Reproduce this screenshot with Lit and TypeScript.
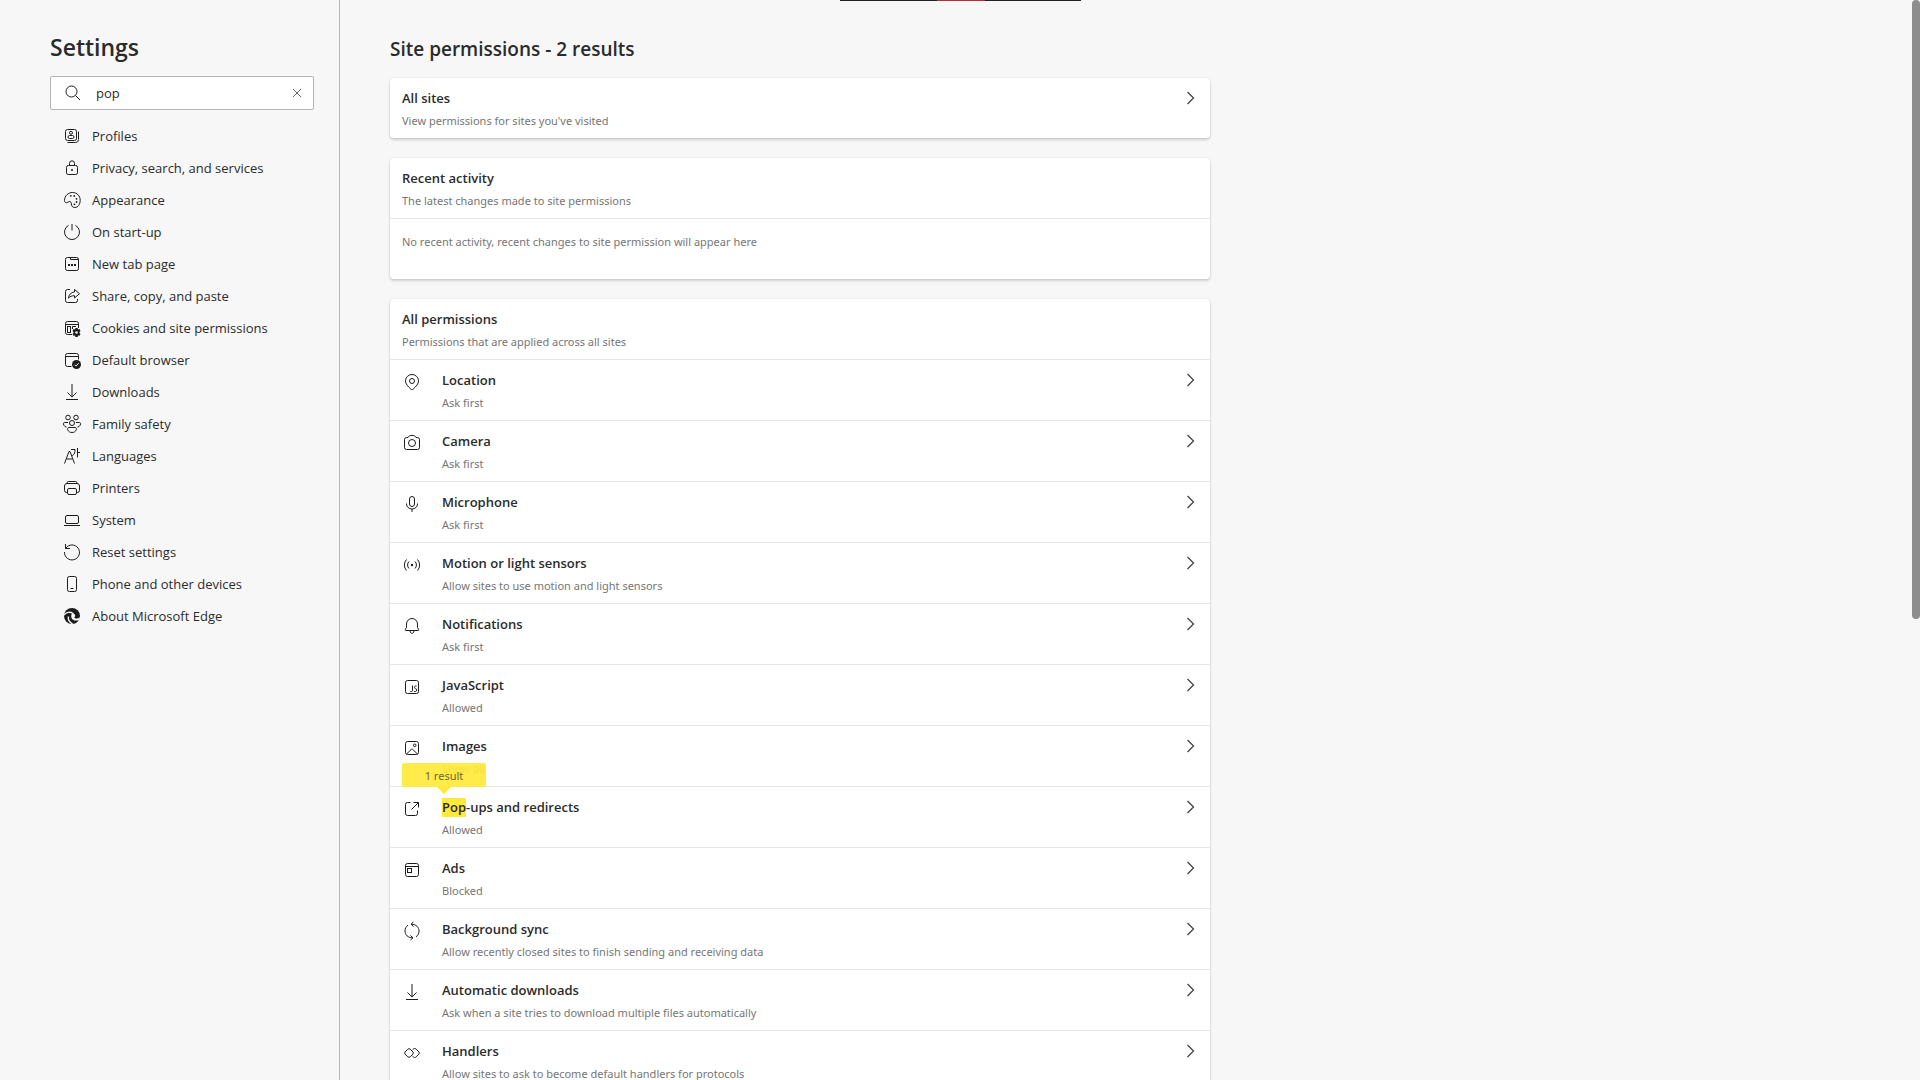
import { LitElement, html, css, svg, nothing } from "lit";
import type { SVGTemplateResult } from "lit";
import { customElement, property, state } from "lit/decorators.js";
import { classMap } from "lit/directives/class-map.js";

/* All icons are drawn on a 20 x 20 grid with one-pixel strokes. */
const icons: Record<string, SVGTemplateResult> = {
  search: svg`<circle cx="9.5" cy="8.5" r="5.5"/><path d="M13.5 12.5L18 17"/>`,
  clear: svg`<path d="M6 6l8 8M14 6l-8 8"/>`,
  chevron: svg`<path d="M6.5 4l6 6-6 6" stroke-width="1.3"/>`,
  profiles: svg`<rect x="3.5" y="3.5" width="11" height="11" rx="2"/><path d="M16.5 5.5v8a3 3 0 0 1-3 3h-8"/><circle cx="9" cy="6.8" r="1.5"/><rect x="6" y="9.5" width="6" height="3" rx="1.5"/>`,
  lock: svg`<rect x="4.5" y="7.5" width="11" height="9" rx="1.8"/><path d="M7.5 7.5V5.3a2.5 2.5 0 0 1 5 0v2.2"/><circle class="fill" cx="10" cy="12" r="1"/>`,
  palette: svg`<path d="M2.5 10.3C2.6 5.8 6.2 2.5 10.5 2.5c4.6 0 7.7 3.4 7.7 7.7 0 4.2-2.2 7.3-5.4 7.3-2.6 0-3.3-1.7-3.5-3.6-.2-1.7-.6-2.5-1.6-2.5-1.3 0-2 1.4-3.4 1.4-1.2 0-1.8-1.1-1.8-2.5z"/><g class="fill"><circle cx="8.8" cy="5.8" r=".9"/><circle cx="12.2" cy="6" r=".9"/><circle cx="14.5" cy="8.8" r=".9"/><circle cx="14.6" cy="12" r=".9"/><circle cx="12.5" cy="14.3" r=".9"/></g>`,
  power: svg`<path d="M10 2v6.5M6.5 3.4a7.5 7.5 0 1 0 7 0"/>`,
  newtab: svg`<rect x="3.5" y="3.5" width="13" height="13" rx="2"/><path d="M8.5 3.5v2h8"/><path class="fill" d="M6 10h2v2H6zM9 10h2v2H9zM12 10h2v2h-2z"/>`,
  share: svg`<path d="M8 3.5H5.5a2 2 0 0 0-2 2v9a2 2 0 0 0 2 2h8a2 2 0 0 0 2-2V13"/><path d="M12.5 3.5l5 4.2-5 4.3V9.7c-2.8 0-4.6.8-6 2.5.4-3.5 2.4-5.9 6-6.3z" stroke-linejoin="round"/>`,
  cookies: svg`<path d="M10 16.5H5.5a2 2 0 0 1-2-2v-9a2 2 0 0 1 2-2h9a2 2 0 0 1 2 2V10M3.5 6.5h13M10.5 11V8.5H14"/><rect x="5.5" y="8.5" width="3" height="6"/><path class="fill" fill-rule="evenodd" d="M13.4 10h2.2l.4 1.4 1.5-.3 1 1.8-1 1.1 0 .9 1 1.1-1 1.8-1.5-.3-.4 1.4h-2.2l-.4-1.4-1.5.3-1-1.8 1-1.1 0-.9-1-1.1 1-1.8 1.5.3zM14.5 13.2a1.3 1.3 0 1 0 0 2.6 1.3 1.3 0 0 0 0-2.6z"/>`,
  browser: svg`<path d="M9.5 16.5h-4a2 2 0 0 1-2-2v-9a2 2 0 0 1 2-2h9a2 2 0 0 1 2 2v4M3.5 6.5h13"/><circle class="fill" cx="14.5" cy="14.5" r="4.5"/><path class="cut" d="M12.5 14.7l1.4 1.4 2.7-2.9"/>`,
  download: svg`<path d="M10 2v13M5.5 10.5L10 15l4.5-4.5M4 17.5h12"/>`,
  family: svg`<circle cx="6" cy="3.5" r="2.3"/><circle cx="14" cy="3.5" r="2.3"/><circle cx="10" cy="9" r="2.5"/><path d="M6 8.5H2.5C.5 8.5 1.5 13 4.5 13M14 8.5h3.5c2 0 1 4.5-2 4.5M6.5 13.5h7c1.6 0 1.300 5-3.500 5s-5.100-5-3.500-5z"/>`,
  languages: svg`<path d="M2.5 17.5L7 5.5h1l4.500 12M4.500 13h6M9 3.500h4c.3 2.500-.5 5-2.800 6.300M15.500 2v9.500M15.500 6.500H18"/>`,
  printer: svg`<path d="M5.500 14.500H4.500a2 2 0 0 1-2-2V8a2.500 2.500 0 0 1 2.500-2.500h10A2.500 2.500 0 0 1 17.500 8v4.500a2 2 0 0 1-2 2h-1M5 5.500v-.5A1.500 1.500 0 0 1 6.500 3.500h7A1.500 1.500 0 0 1 15 5v.5"/><rect x="5.500" y="10.500" width="9" height="6" rx="1.500"/>`,
  laptop: svg`<rect x="3.500" y="5.500" width="13" height="8" rx="1.500"/><path d="M2 15.500h16"/>`,
  reset: svg`<path d="M3.500 2v4.500H8M3.800 6.200A7.500 7.500 0 1 1 2.500 10"/>`,
  phone: svg`<rect x="5.500" y="2.500" width="9" height="15" rx="1.800"/><path d="M8.500 14.500h3"/>`,
  edge: svg`<circle class="fill" cx="10" cy="10" r="8"/><path class="cut" d="M2 9C4 6 8.300 5.400 11 7.500" stroke-width="1.400"/><path class="cut" d="M6.400 10.500c-.5 3 1 5.800 4.200 7.400" stroke-width="1.400"/><path class="cutfill" d="M10.800 7c2.600.8 2.900 3.400 1.500 4.400.5 1.500 3.300 1.500 5.900-.2l-1 2.800c-3.400 1.500-7.900.2-8-3.800 0-1.300.6-2.500 1.600-3.200z"/>`,
  pin: svg`<circle cx="10" cy="9" r="2.500"/><path d="M10 17.600c-.5 0-.9-.2-1.200-.5C6 14.400 3.500 12 3.500 8.900a6.500 6.400 0 0 1 13 0c0 3.100-2.500 5.500-5.300 8.200-.3.300-.7.500-1.200.5z"/>`,
  camera: svg`<path d="M4.500 4.500H6l1.200-1.500c.3-.3.600-.5 1-.5h3.600c.4 0 .7.200 1 .5L14 4.500h1.500a2 2 0 0 1 2 2v8a2 2 0 0 1-2 2h-11a2 2 0 0 1-2-2v-8a2 2 0 0 1 2-2z"/><circle cx="10" cy="10" r="3.500"/>`,
  mic: svg`<rect x="7.500" y="2.500" width="5" height="10" rx="2.500"/><path d="M4.500 9.500v.5a5.500 5 0 0 0 11 0v-.5M10 15v3"/>`,
  sensors: svg`<circle class="fill" cx="10" cy="10" r="1.200"/><path d="M4.500 4.500a8.200 8.200 0 0 0 0 11M15.500 4.500a8.200 8.200 0 0 1 0 11M7 6.500a5 5 0 0 0 0 7M13 6.500a5 5 0 0 1 0 7"/>`,
  bell: svg`<path d="M10 2.500a5.500 5.500 0 0 0-5.500 5.500v3.300L3.300 13.700c-.2.400 0 .8.500.8h12.400c.500 0 .7-.4.5-.8L15.500 11.300V8A5.500 5.500 0 0 0 10 2.500zM8 15c.2 1.600 1 2.300 2 2.300s1.800-.7 2-2.300"/>`,
  script: svg`<rect x="3.500" y="3.500" width="13" height="13" rx="2"/><path d="M10.500 8.500v5c0 .7-.3 1-.9 1H8.300M14.700 9h-1.200c-1.300 0-1.300 2.600 0 2.600 1.700 0 1.700 2.900 0 2.900h-1.500"/>`,
  image: svg`<rect x="3.500" y="3.500" width="13" height="13" rx="2.200"/><path d="M4.500 16l4.800-4.600a1 1 0 0 1 1.400 0L15.500 16"/><circle cx="12.700" cy="7.300" r="1.300"/>`,
  popup: svg`<path d="M8.500 3.500H5.500a2 2 0 0 0-2 2v9a2 2 0 0 0 2 2h8a2 2 0 0 0 2-2v-3M11.500 3.500h5v5M16.500 3.500l-7 7"/>`,
  ads: svg`<rect x="3.500" y="3.500" width="13" height="13" rx="2"/><path d="M3.500 6.500h13"/><rect x="5.500" y="8.500" width="4" height="4"/>`,
  sync: svg`<path d="M11.500 1L9 3.200l2.500 2.300M8.500 19l2.500-2.200-2.500-2.300M9.500 3.200c4.500 0 7.500 3 7.500 6.800 0 2.500-1 4.500-3 5.800M10.500 16.800C6 16.800 3 13.800 3 10c0-2.500 1-4.500 3-5.800"/>`,
  handlers: svg`<path d="M5.800 6.200a1.800 1.800 0 0 1 2.400 0l2.700 2.700a1.600 1.600 0 0 1 0 2.200l-2.700 2.700a1.800 1.800 0 0 1-2.400 0L3.100 11.100a1.600 1.600 0 0 1 0-2.200zM10.500 6.800l.8-.6a1.800 1.800 0 0 1 2.900 0l2.700 2.700a1.600 1.600 0 0 1 0 2.200l-2.700 2.700a1.800 1.800 0 0 1-2.900 0l-.8-.6"/>`,
};

@customElement("ui-icon")
class UiIcon extends LitElement {
  @property() name = "";

  static styles = css`
    :host {
      display: block;
      flex: none;
      width: 20px;
      height: 20px;
      color: #1c1c1c;
    }
    .icon {
      display: block;
      width: 20px;
      height: 20px;
      overflow: visible;
      fill: none;
      stroke: currentColor;
      stroke-width: 1;
    }
    .fill {
      fill: currentColor;
      stroke: none;
    }
    .cut {
      stroke: #f7f7f7;
    }
    .cutfill {
      fill: #f7f7f7;
      stroke: none;
    }
  `;

  render() {
    return html`<svg class="icon" viewBox="0 0 20 20" aria-hidden="true">${icons[this.name]}</svg>`;
  }
}

interface Permission {
  icon: string;
  title: string;
  detail: string;
}

const navItems: [string, string][] = [
  ["profiles", "Profiles"],
  ["lock", "Privacy, search, and services"],
  ["palette", "Appearance"],
  ["power", "On start-up"],
  ["newtab", "New tab page"],
  ["share", "Share, copy, and paste"],
  ["cookies", "Cookies and site permissions"],
  ["browser", "Default browser"],
  ["download", "Downloads"],
  ["family", "Family safety"],
  ["languages", "Languages"],
  ["printer", "Printers"],
  ["laptop", "System"],
  ["reset", "Reset settings"],
  ["phone", "Phone and other devices"],
  ["edge", "About Microsoft Edge"],
];

const permissions: Permission[] = [
  { icon: "pin", title: "Location", detail: "Ask first" },
  { icon: "camera", title: "Camera", detail: "Ask first" },
  { icon: "mic", title: "Microphone", detail: "Ask first" },
  { icon: "sensors", title: "Motion or light sensors", detail: "Allow sites to use motion and light sensors" },
  { icon: "bell", title: "Notifications", detail: "Ask first" },
  { icon: "script", title: "JavaScript", detail: "Allowed" },
  { icon: "image", title: "Images", detail: "Show all" },
  { icon: "popup", title: "Pop-ups and redirects", detail: "Allowed" },
  { icon: "ads", title: "Ads", detail: "Blocked" },
  { icon: "sync", title: "Background sync", detail: "Allow recently closed sites to finish sending and receiving data" },
  { icon: "download", title: "Automatic downloads", detail: "Ask when a site tries to download multiple files automatically" },
  { icon: "handlers", title: "Handlers", detail: "Allow sites to ask to become default handlers for protocols" },
];

@customElement("app-root")
class AppRoot extends LitElement {
  @state() private query = "pop";

  static styles = css`
    :host {
      display: block;
      font-family: "Open Sans", "Noto Sans", sans-serif;
      font-size: 13px;
      line-height: 20px;
      color: #2b2b2b;
    }
    * {
      box-sizing: border-box;
    }
    h1,
    h2,
    h3,
    p,
    ul {
      margin: 0;
      padding: 0;
    }
    .page {
      position: relative;
      display: flex;
      height: 100vh;
      overflow: hidden;
      background: #f7f7f7;
    }
    .sidebar {
      flex: none;
      width: 340px;
      padding: 32px 25px 0 50px;
      border-right: 1px solid #b5b5b5;
    }
    .brand {
      font-size: 23px;
      font-weight: 600;
      line-height: 30px;
    }
    .search {
      display: flex;
      align-items: center;
      gap: 14px;
      height: 34px;
      margin-top: 14px;
      padding: 0 6px 0 11px;
      background: #fff;
      border: 1px solid #b3b3b3;
      border-radius: 2px;
    }
    .field {
      flex: 1;
      min-width: 0;
      padding: 0;
      border: 0;
      outline: 0;
      background: none;
      font: inherit;
      color: inherit;
    }
    .clear {
      flex: none;
      padding: 0;
      border: 0;
      background: none;
      cursor: pointer;
    }
    .dim {
      color: #666;
    }
    .nav {
      margin-top: 10px;
      list-style: none;
    }
    .link {
      display: flex;
      align-items: center;
      gap: 10px;
      height: 32px;
      padding-left: 12px;
      color: inherit;
      text-decoration: none;
    }
    .main {
      flex: 1;
      min-width: 0;
      padding: 32px 50px 0;
    }
    .heading {
      font-size: 19px;
      font-weight: 600;
      line-height: 34px;
      margin-bottom: 12px;
    }
    .card {
      max-width: 820px;
      margin-bottom: 20px;
      background: #fff;
      border-radius: 4px;
      box-shadow: 0 2px 3px rgba(0, 0, 0, 0.16), 0 0 2px rgba(0, 0, 0, 0.12);
    }
    .row {
      position: relative;
      display: flex;
      align-items: flex-start;
      width: 100%;
      height: 60px;
      padding: 10px 9px 0 12px;
      border: 0;
      background: none;
      font: inherit;
      color: inherit;
      text-align: left;
    }
    button.row {
      cursor: pointer;
    }
    .row + .row,
    .row.ruled,
    .empty {
      height: 61px;
      border-top: 1px solid #e6e6e6;
    }
    .glyph {
      margin: 2px 20px 0 0;
    }
    .texts {
      display: flex;
      flex: 1;
      flex-direction: column;
      gap: 4px;
      min-width: 0;
    }
    .title {
      font-size: 13px;
      font-weight: 600;
      line-height: 20px;
    }
    .detail,
    .empty {
      font-family: "Noto Sans", "Open Sans", sans-serif;
      font-size: 11px;
      line-height: 18px;
      color: #767676;
    }
    .empty {
      padding: 14px 12px 0;
    }
    .go {
      color: #444;
    }
    .hit {
      display: inline-block;
      height: 19px;
      line-height: 19px;
      background: #ffe93b;
      color: inherit;
    }
    .callout {
      position: absolute;
      left: 12px;
      bottom: 100%;
      z-index: 1;
      width: 84px;
      height: 24px;
      border-radius: 2px;
      background: rgba(255, 233, 59, 0.92);
      font-family: "Noto Sans", "Open Sans", sans-serif;
      font-size: 11px;
      line-height: 26px;
      text-align: center;
      color: #6e6730;
    }
    .callout::after {
      content: "";
      position: absolute;
      top: 100%;
      left: 50%;
      margin-left: -7px;
      border: 7px solid transparent;
      border-bottom: 0;
      border-top-color: #ffe93b;
    }
    .strip {
      position: absolute;
      top: 0;
      left: 50%;
      display: flex;
      justify-content: center;
      width: 241px;
      height: 1px;
      margin-left: -120px;
      background: #222;
    }
    .accent {
      width: 48px;
      background: #b0303c;
    }
    .thumb {
      position: absolute;
      top: 0;
      right: 0;
      width: 8px;
      height: 619px;
      border-radius: 4px;
      background: #8d8d8d;
    }
  `;

  private matches(text: string) {
    return this.query !== "" && text.toLowerCase().startsWith(this.query.toLowerCase());
  }

  private renderTitle(text: string) {
    if (!this.matches(text)) return html`${text}`;
    const size = this.query.length;
    return html`<mark class="hit">${text.slice(0, size)}</mark>${text.slice(size)}`;
  }

  private renderPermission(item: Permission) {
    const found = this.matches(item.title);
    return html`
      <button class=${classMap({ row: true, ruled: true, found })} type="button">
        ${found ? html`<span class="callout" role="status">1 result</span>` : nothing}
        <ui-icon class="glyph" name=${item.icon}></ui-icon>
        <span class="texts">
          <span class="title">${this.renderTitle(item.title)}</span>
          <span class="detail">${item.detail}</span>
        </span>
        <ui-icon class="go" name="chevron"></ui-icon>
      </button>
    `;
  }

  render() {
    return html`
      <div class="page">
        <aside class="sidebar">
          <h1 class="brand">Settings</h1>
          <div class="search" role="search">
            <ui-icon name="search"></ui-icon>
            <input
              class="field"
              type="text"
              aria-label="Search settings"
              .value=${this.query}
              @input=${(e: Event) => (this.query = (e.target as HTMLInputElement).value)}
            />
            <button class="clear" type="button" aria-label="Clear search" @click=${() => (this.query = "")}>
              <ui-icon class="dim" name="clear"></ui-icon>
            </button>
          </div>
          <nav aria-label="Settings sections">
            <ul class="nav">
              ${navItems.map(
                ([icon, label]) => html`<li><a class="link" href="#${icon}"><ui-icon name=${icon}></ui-icon>${label}</a></li>`
              )}
            </ul>
          </nav>
        </aside>
        <main class="main">
          <h2 class="heading">Site permissions - 2 results</h2>
          <section class="card">
            <button class="row" type="button">
              <span class="texts">
                <span class="title">All sites</span>
                <span class="detail">View permissions for sites you've visited</span>
              </span>
              <ui-icon class="go" name="chevron"></ui-icon>
            </button>
          </section>
          <section class="card">
            <div class="row">
              <div class="texts">
                <h3 class="title">Recent activity</h3>
                <p class="detail">The latest changes made to site permissions</p>
              </div>
            </div>
            <p class="empty">No recent activity, recent changes to site permission will appear here</p>
          </section>
          <section class="card">
            <div class="row">
              <div class="texts">
                <h3 class="title">All permissions</h3>
                <p class="detail">Permissions that are applied across all sites</p>
              </div>
            </div>
            ${permissions.map((item) => this.renderPermission(item))}
          </section>
        </main>
        <div class="strip"><span class="accent"></span></div>
        <div class="thumb"></div>
      </div>
    `;
  }
}
